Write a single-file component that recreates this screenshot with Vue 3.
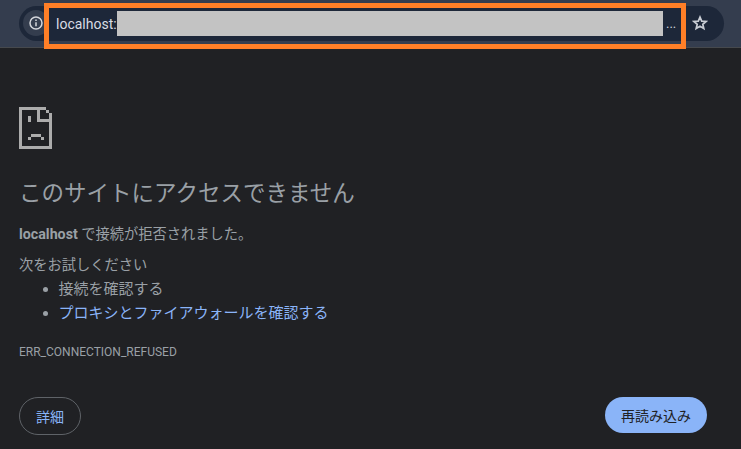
<script setup>
const tips = [
  { text: '接続を確認する', link: false },
  { text: 'プロキシとファイアウォールを確認する', link: true },
]
</script>

<template>
  <div class="window">
    <header class="toolbar">
      <div class="omnibox">
        <span class="info">
          <svg width="14" height="14" viewBox="0 0 14 14">
            <circle cx="7" cy="7" r="6" fill="none" stroke="#d5d7dc" stroke-width="1.5" />
            <path d="M6.25 6.2h1.5v4h-1.5zM6.25 3.6h1.5v1.5h-1.5z" fill="#d5d7dc" />
          </svg>
        </span>
        <div class="address">
          <span class="host">localhost:</span>
          <span class="mask"></span>
          <span class="dots">...</span>
        </div>
        <svg class="star" width="16" height="16" viewBox="0 0 16 16">
          <path d="M8 2.1 9.7 6.1 14.1 6.5 10.8 9.3 11.8 13.6 8 11.3 4.2 13.6 5.2 9.3 1.9 6.5 6.3 6.1Z" fill="none" stroke="#c9cdd4" stroke-width="1.7" />
        </svg>
      </div>
    </header>
    <main class="error">
      <svg class="sad" width="33" height="42" viewBox="0 0 11 14" shape-rendering="crispEdges">
        <path fill="#acacac" d="M0 0h9v1H7v3h3V2h1v12H0zM1 1v12h9V5H6V1zM9 1h1v1H9zM3 3h1v2H3zM4 9h3.4v1H4zM3 10h1v1H3zM7.4 10h1v1h-1z" />
      </svg>
      <h1>このサイトにアクセスできません</h1>
      <p class="summary"><strong>localhost</strong> で接続が拒否されました。</p>
      <p class="try">次をお試しください</p>
      <ul>
        <li v-for="tip in tips" :key="tip.text">
          <a v-if="tip.link">{{ tip.text }}</a>
          <span v-else>{{ tip.text }}</span>
        </li>
      </ul>
      <div class="code">ERR_CONNECTION_REFUSED</div>
      <div class="actions">
        <button class="details">詳細</button>
        <button class="reload">再読み込み</button>
      </div>
    </main>
  </div>
</template>

<style>
body {
  margin: 0;
  background: #202124;
}
</style>

<style scoped>
.window {
  height: 449px;
  overflow: hidden;
  background: #202124;
  color: #9aa0a6;
  font-family: Roboto, "Noto Sans CJK JP", sans-serif;
}
.toolbar {
  box-sizing: border-box;
  height: 48px;
  padding: 3px 17px 0 19px;
  background: #343d4e;
  border-bottom: 1px solid #46494d;
}
.omnibox {
  display: flex;
  align-items: flex-start;
  height: 35px;
  margin-top: 3px;
  border-radius: 18px;
  background: #1d2739;
}
.info {
  display: flex;
  align-items: center;
  justify-content: center;
  flex: none;
  width: 26px;
  height: 26px;
  margin: 4px 0 0 4px;
  border-radius: 13px;
  background: #343d4e;
}
.address {
  position: relative;
  display: flex;
  align-items: center;
  box-sizing: border-box;
  flex: none;
  width: 642px;
  height: 46px;
  margin: -3px 0 0 -5px;
  padding: 0 0 5px 7px;
  border: 5px solid #ff7f27;
  background: linear-gradient(#1d2739 33px, #343d4e 33px);
}
.host {
  width: 61px;
  font-size: 14px;
  color: #d8dce4;
}
.mask {
  width: 546px;
  height: 25px;
  background: #c3c3c3;
}
.dots {
  margin-left: 3px;
  font-size: 13px;
  color: #d0d4dc;
}
.star {
  flex: none;
  margin: 9px 0 0 6px;
}
.error {
  padding: 59px 34px 0 19px;
}
.sad {
  display: block;
}
h1 {
  margin: 28px 0 0;
  font-size: 22.5px;
  font-weight: 400;
  line-height: 32px;
}
p {
  margin: 0;
  font-size: 14.25px;
  line-height: 24px;
}
.summary {
  margin-top: 13px;
}
.try {
  margin-top: 7px;
}
ul {
  margin: 0;
  padding: 0 0 0 39.5px;
}
li {
  font-size: 15px;
  line-height: 24px;
}
a {
  color: #8ab4f8;
}
.code {
  margin-top: 18px;
  font-size: 12px;
  line-height: 18px;
}
.actions {
  display: flex;
  justify-content: space-between;
  align-items: flex-start;
  margin-top: 36px;
}
button {
  box-sizing: border-box;
  padding: 2px 0 0;
  border: 0;
  font-family: inherit;
  font-size: 14px;
  line-height: 20px;
}
.details {
  width: 62px;
  height: 38px;
  border: 1px solid #5f6368;
  border-radius: 19px;
  background: transparent;
  color: #8ab4f8;
}
.reload {
  width: 102px;
  height: 36px;
  border-radius: 18px;
  background: #8ab4f8;
  color: #202124;
}
</style>
